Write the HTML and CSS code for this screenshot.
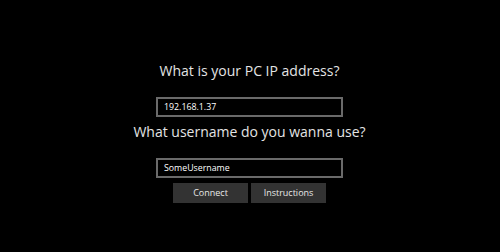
FILE: index.html
```html
<!DOCTYPE html>
<html>
<head>
<meta charset="utf-8">
<link rel="stylesheet" href="styles.css">
</head>
<body>
<main class="form">
  <h1 class="label first">What is your PC IP address?</h1>
  <div class="field">192.168.1.37</div>
  <h1 class="label second">What username do you wanna use?</h1>
  <div class="field">SomeUsername</div>
  <div class="actions">
    <button class="btn">Connect</button>
    <button class="btn">Instructions</button>
  </div>
</main>
</body>
</html>
```
FILE: styles.css
```css
html, body {
  margin: 0;
  padding: 0;
  background: #000;
  width: 500px;
  height: 252px;
  overflow: hidden;
}
body {
  font-family: "Open Sans", "Noto Sans", sans-serif;
  color: #e6e6e6;
}
.form {
  display: flex;
  flex-direction: column;
  align-items: center;
  padding-top: 61px;
  padding-right: 1px;
}
.label {
  margin: 0;
  font-weight: 400;
  font-size: 14px;
  line-height: 20px;
  color: #e4e4e4;
}
.first {
  margin-bottom: 16px;
}
.second {
  margin-top: 5px;
  margin-bottom: 16px;
}
.field {
  box-sizing: border-box;
  width: 187px;
  height: 20px;
  border: 2px solid #6a6a6a;
  padding: 0 6px;
  font-size: 8.8px;
  line-height: 16px;
  color: #fff;
}
.actions {
  display: flex;
  gap: 3px;
  margin-top: 5px;
}
.btn {
  width: 75px;
  height: 20px;
  border: 0;
  padding: 0;
  background: #333;
  color: #e8e8e8;
  font-family: "Open Sans", "Noto Sans", sans-serif;
  font-size: 9px;
  line-height: 20px;
}
```
